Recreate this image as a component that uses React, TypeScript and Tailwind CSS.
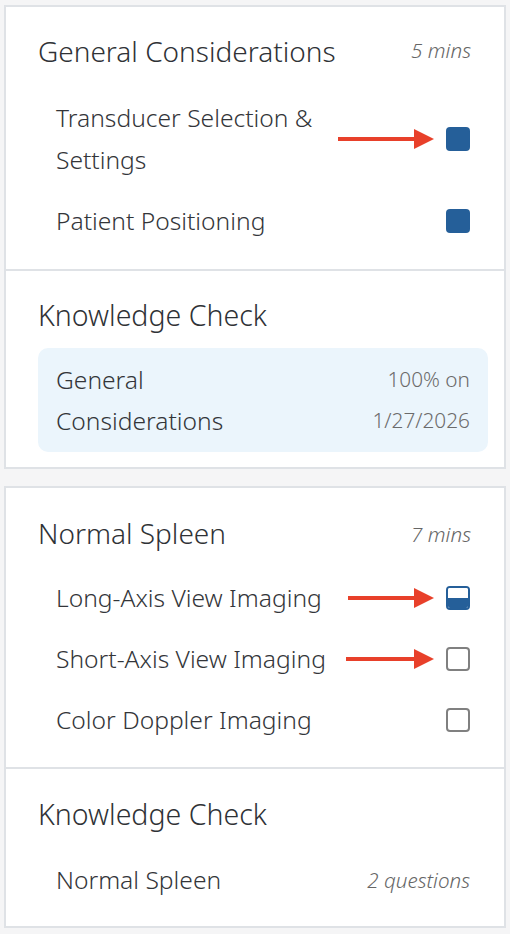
import React from "react";

const font = { fontFamily: "'Noto Sans', 'Open Sans', sans-serif" };

function Arrow({ left, width }: { left: number; width: number }) {
  return (
    <svg
      className="absolute top-1/2 -translate-y-1/2"
      style={{ left, width }}
      height={22}
      viewBox={`0 0 ${width} 22`}
    >
      <rect x={0} y={9} width={width - 18} height={4} fill="#e8402a" />
      <polygon points={`${width - 20},1 ${width},11 ${width - 20},21`} fill="#e8402a" />
    </svg>
  );
}

function Box({ state }: { state: "full" | "half" | "empty" }) {
  if (state === "full")
    return <div className="w-[24px] h-[24px] rounded-[4px] bg-[#255f99] shrink-0" />;
  if (state === "half")
    return (
      <div className="w-[24px] h-[24px] rounded-[4px] border-2 border-[#255f99] shrink-0 flex flex-col overflow-hidden">
        <div className="flex-1 bg-white" />
        <div className="flex-1 bg-[#255f99]" />
      </div>
    );
  return <div className="w-[24px] h-[24px] rounded-[4px] border-2 border-[#808080] bg-white shrink-0" />;
}

function Item({
  text,
  state,
  arrow,
}: {
  text: React.ReactNode;
  state: "full" | "half" | "empty";
  arrow?: { left: number; width: number };
}) {
  return (
    <div className="relative flex items-center justify-between pl-[18px] pr-[18px]">
      <div className="text-[24.6px] leading-[42px] text-[#333539] font-light">{text}</div>
      <Box state={state} />
      {arrow && <Arrow left={arrow.left} width={arrow.width} />}
    </div>
  );
}

export default function App() {
  return (
    <div className="w-[510px] h-[934px] bg-[#f5f5f6] pt-[5px] px-[4px]" style={font}>
      {/* Card 1 */}
      <div className="bg-white border-2 border-[#dfe2e6]">
        <div className="pt-[26px] pb-[27px] pl-[32px] pr-[16px]">
          <div className="flex items-center justify-between h-[36px] pr-[17px]">
            <div className="text-[28px] font-light text-[#2f3236]">General Considerations</div>
            <div className="text-[20.7px] italic font-light text-[#666]">5 mins</div>
          </div>
          <div className="mt-[28px] flex flex-col gap-[19px]">
            <Item
              text={
                <>
                  Transducer Selection &amp;
                  <br />
                  Settings
                </>
              }
              state="full"
              arrow={{ left: 300, width: 96 }}
            />
            <Item text="Patient Positioning" state="full" />
          </div>
        </div>
        <div className="h-[2px] bg-[#dfe2e6]" />
        <div className="pt-[26px] pb-[15px] pl-[32px] pr-[16px]">
          <div className="flex items-center h-[36px]">
            <div className="text-[28.5px] font-light text-[#2f3236]">Knowledge Check</div>
          </div>
          <div className="mt-[15px] bg-[#ebf5fc] rounded-[10px] h-[104px] flex items-center justify-between px-[18px]">
            <div className="text-[24.6px] leading-[41px] text-[#333539] font-light">
              General
              <br />
              Considerations
            </div>
            <div className="text-[20.8px] leading-[41px] text-[#6b6b6b] font-light text-right">
              100% on
              <br />
              1/27/2026
            </div>
          </div>
        </div>
      </div>

      {/* Card 2 */}
      <div className="mt-[17px] bg-white border-2 border-[#dfe2e6]">
        <div className="pt-[27px] pb-[26px] pl-[32px] pr-[16px]">
          <div className="flex items-center justify-between h-[36px] pr-[17px]">
            <div className="text-[28px] font-light text-[#2f3236]">Normal Spleen</div>
            <div className="text-[20.7px] italic font-light text-[#666] mt-[4px]">7 mins</div>
          </div>
          <div className="mt-[26px] flex flex-col gap-[19px]">
            <Item text="Long-Axis View Imaging" state="half" arrow={{ left: 310, width: 86 }} />
            <Item text="Short-Axis View Imaging" state="empty" arrow={{ left: 308, width: 88 }} />
            <Item text="Color Doppler Imaging" state="empty" />
          </div>
        </div>
        <div className="h-[2px] bg-[#dfe2e6]" />
        <div className="pt-[27px] pb-[25px] pl-[32px] pr-[16px]">
          <div className="flex items-center h-[36px]">
            <div className="text-[28.5px] font-light text-[#2f3236]">Knowledge Check</div>
          </div>
          <div className="mt-[27px] flex items-center justify-between px-[18px]">
            <div className="text-[24.6px] leading-[42px] text-[#333539] font-light">Normal Spleen</div>
            <div className="text-[20.6px] italic font-light text-[#666]">2 questions</div>
          </div>
        </div>
      </div>
    </div>
  );
}
